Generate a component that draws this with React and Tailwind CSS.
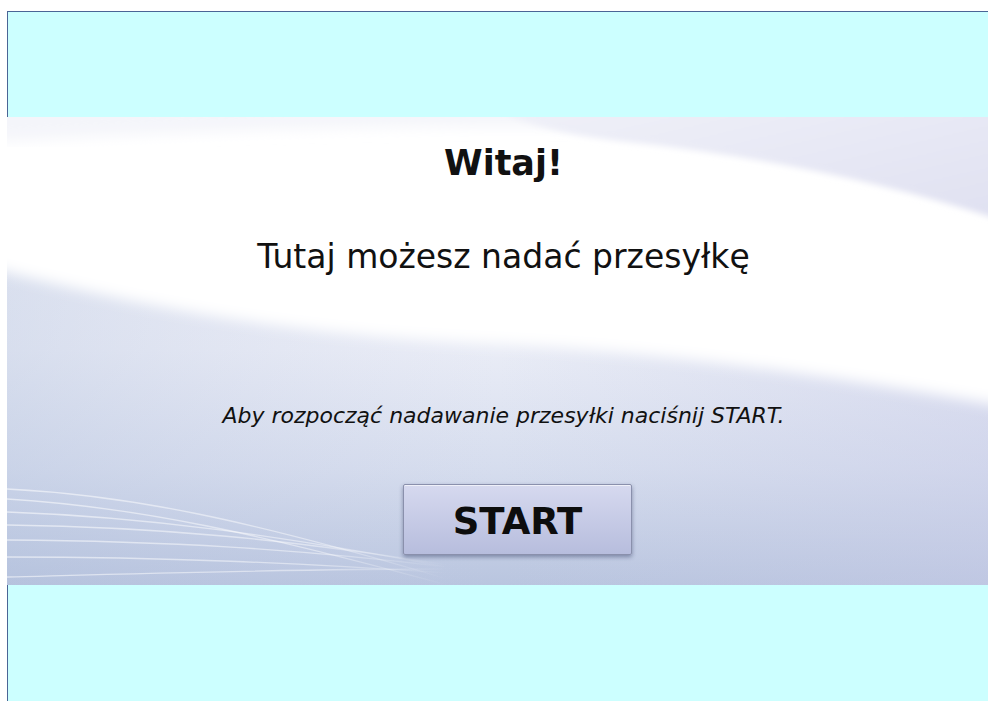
import React from 'react';

// Soft swoosh backdrop with a few fine lines fanning in from the lower left
const Backdrop = () => (
    <svg
        className="absolute inset-0 h-full w-full"
        viewBox="0 0 981 468"
        preserveAspectRatio="none"
    >
        <defs>
            <linearGradient id="base" x1="0" y1="0" x2="0" y2="1">
                <stop offset="0" stopColor="#f3f4fa" />
                <stop offset="0.5" stopColor="#e9ecf6" />
                <stop offset="0.75" stopColor="#d6ddee" />
                <stop offset="1" stopColor="#b9c5df" />
            </linearGradient>
            <linearGradient id="tint" x1="0" y1="0" x2="1" y2="0">
                <stop offset="0" stopColor="#aebdda" stopOpacity="0.3" />
                <stop offset="0.5" stopColor="#c8cde6" stopOpacity="0" />
                <stop offset="1" stopColor="#c9cbe8" stopOpacity="0.4" />
            </linearGradient>
            <linearGradient id="topRight" x1="0" y1="0" x2="1" y2="1">
                <stop offset="0" stopColor="#f1f2f9" />
                <stop offset="1" stopColor="#dfe0f1" />
            </linearGradient>
            <linearGradient id="fade" x1="0" y1="0" x2="1" y2="0">
                <stop offset="0" stopColor="#ffffff" stopOpacity="0.55" />
                <stop offset="0.7" stopColor="#ffffff" stopOpacity="0.45" />
                <stop offset="1" stopColor="#ffffff" stopOpacity="0" />
            </linearGradient>
            <filter id="soft" x="-10%" y="-10%" width="120%" height="120%">
                <feGaussianBlur stdDeviation="7" />
            </filter>
            <filter id="softer" x="-10%" y="-10%" width="120%" height="120%">
                <feGaussianBlur stdDeviation="3" />
            </filter>
        </defs>
        <rect width="981" height="468" fill="url(#base)" />
        <rect width="981" height="468" fill="url(#tint)" />
        <path
            d="M-20,-20 L1000,-20 L1000,290 C820,258 640,232 470,226 C300,218 150,195 -20,150 Z"
            fill="#ffffff"
            filter="url(#soft)"
        />
        <path
            d="M-20,-20 L1000,-20 L1000,20 C700,10 400,0 -20,25 Z"
            fill="#f4f5fa"
            filter="url(#soft)"
        />
        <path
            d="M470,-20 L1000,-20 L1000,105 C880,66 760,40 620,25 C560,18 510,8 470,-20 Z"
            fill="url(#topRight)"
            filter="url(#softer)"
        />
        <g fill="none" stroke="url(#fade)" strokeWidth="1.3">
            <path d="M0,372 C120,378 240,402 440,462" />
            <path d="M0,382 C130,390 250,416 440,468" />
            <path d="M0,395 C140,400 270,418 440,450" />
            <path d="M0,408 C150,410 280,422 440,448" />
            <path d="M0,423 C160,424 290,432 440,450" />
            <path d="M0,440 C160,440 290,446 440,456" />
            <path d="M0,460 C150,456 280,452 440,452" />
        </g>
    </svg>
);

const App = () => {
    const font = { fontFamily: '"DejaVu Sans", Verdana, sans-serif' };

    return (
        <div className="min-h-screen bg-white pt-[11px] pl-[7px]" style={font}>
            <div className="border-t border-[#4a6596]">
                <div className="h-[105px] border-l border-[#4a6596] bg-[#ccffff]" />

                <div className="relative h-[468px] overflow-hidden">
                    <Backdrop />
                    <div className="relative flex flex-col items-center pt-[29px] pl-[12px] text-[#111]">
                        <h1 className="text-[35px] font-bold leading-none">Witaj!</h1>
                        <p className="mt-[59px] text-[33px] leading-none">Tutaj możesz nadać przesyłkę</p>
                        <p className="mt-[132px] text-[22px] italic leading-none">
                            Aby rozpocząć nadawanie przesyłki naciśnij START.
                        </p>
                        <button className="mt-[57px] ml-[28px] flex h-[71px] w-[229px] items-center justify-center rounded-[2px] border border-[#8a90ac] bg-gradient-to-b from-[#d6d9ef] to-[#b7bddd] pt-1 text-[37px] font-bold leading-none text-[#0d0d0d] shadow-[0_2px_4px_rgba(40,50,90,0.45),inset_0_1px_0_rgba(255,255,255,0.6)]">
                            START
                        </button>
                    </div>
                </div>

                <div className="h-[116px] border-l border-[#4a6596] bg-[#ccffff]" />
            </div>
        </div>
    );
};

export default App;
